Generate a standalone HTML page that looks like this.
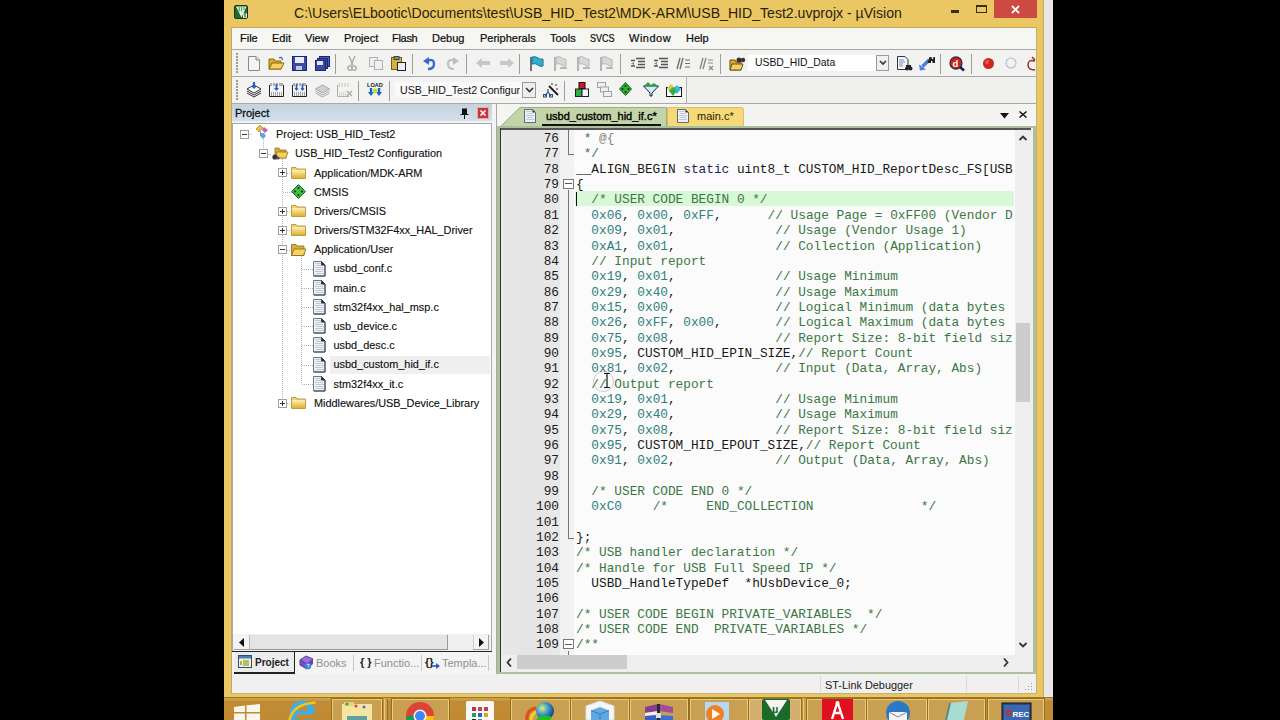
<!DOCTYPE html><html><head><meta charset="utf-8"><style>
*{margin:0;padding:0;box-sizing:border-box}
html,body{width:1280px;height:720px;overflow:hidden;background:#000}
body{position:relative;font-family:"Liberation Sans",sans-serif;}
.a{position:absolute}
.title{font-size:14.1px;color:#2c220a;white-space:nowrap;letter-spacing:0}
.menu{top:32px;font-size:11px;color:#0a0a0a;-webkit-text-stroke:0.22px #111;white-space:nowrap}
.sep{position:absolute;width:1px;background:#9c9c9c}
.code{position:absolute;left:576px;font-family:"Liberation Mono",monospace;font-size:12.77px;line-height:15.35px;white-space:pre;color:#181818}
.ln{position:absolute;left:501px;width:58px;font-family:"Liberation Mono",monospace;font-size:12.77px;line-height:15.35px;white-space:pre;color:#1a1a1a;text-align:right}
.c{color:#3a7744}
.n{color:#2e8080}
.k{color:#24245e}
.d{color:#8a7e70}
.tree{position:absolute;font-size:10.9px;color:#0a0a0a;-webkit-text-stroke:0.12px #222;white-space:nowrap;line-height:13px}
svg{position:absolute;overflow:visible}
</style></head><body>
<div class="a" style="left:224px;top:0;width:820px;height:698px;background:#EAC763"></div>
<div class="a" style="left:1043px;top:0;width:1px;height:698px;background:#c9ad52"></div>
<div class="a" style="left:1044px;top:0;width:9px;height:697px;background:#e8e8e6"></div>
<div class="a" style="left:232px;top:28px;width:804px;height:665px;background:#f0f0f0"></div>
<svg style="left:234px;top:5px" width="14" height="14"><rect x="0.5" y="0.5" width="13" height="13" rx="1.5" fill="#1f6c2a" stroke="#0d3a12"/><path d="M2 1.5H12.5L7.5 12.5Z" fill="#e4f2e0"/><path d="M5.2 2V6.5M7.6 2V6.5M10 2V5" stroke="#4a8a50" stroke-width="1"/><rect x="9" y="8.5" width="4" height="4.5" fill="#f4f8f0"/><path d="M12 9.5H10.2V10.8H11.8V12H9.8" stroke="#2a6a30" stroke-width=".8" fill="none"/></svg>
<div class="a title" style="left:294px;top:4.9px">C:\Users\ELbootic\Documents\test\USB_HID_Test2\MDK-ARM\USB_HID_Test2.uvprojx - µVision</div>
<div class="a" style="left:951px;top:10px;width:8px;height:3px;background:#3a2e10"></div>
<div class="a" style="left:976px;top:5px;width:11px;height:8px;border:1px solid #3a2e10;border-top-width:2px"></div>
<div class="a" style="left:994px;top:0;width:43px;height:18px;background:#CC4A42"></div>
<svg style="left:1011px;top:5px" width="9" height="9"><path d="M1 1L8 8M8 1L1 8" stroke="#fff" stroke-width="1.8"/></svg>
<div class="a" style="left:232px;top:28px;width:804px;height:21px;background:#f6f6f2"></div>
<div class="a" style="left:231px;top:27px;width:806px;height:1px;background:#c4a858"></div>
<div class="a" style="left:231px;top:27px;width:1px;height:667px;background:#c0a868"></div>
<div class="a" style="left:1036px;top:27px;width:1px;height:667px;background:#c8b070"></div>
<div class="a" style="left:231px;top:693px;width:806px;height:1px;background:#c8b070"></div>
<div class="a menu" style="left:240px;">File</div>
<div class="a menu" style="left:272px;">Edit</div>
<div class="a menu" style="left:305px;">View</div>
<div class="a menu" style="left:344px;">Project</div>
<div class="a menu" style="left:392px;letter-spacing:-0.3px">Flash</div>
<div class="a menu" style="left:432px;">Debug</div>
<div class="a menu" style="left:480px;">Peripherals</div>
<div class="a menu" style="left:550px;">Tools</div>
<div class="a menu" style="left:590px;transform:scaleX(0.82);transform-origin:0 0">SVCS</div>
<div class="a menu" style="left:629px;letter-spacing:0.5px">Window</div>
<div class="a menu" style="left:686px;">Help</div>
<div class="a" style="left:232px;top:49px;width:804px;height:1px;background:#a8a8a8"></div>
<div class="a" style="left:232px;top:50px;width:804px;height:26px;background:#f2f2f0"></div>
<div class="a" style="left:232px;top:76px;width:804px;height:1px;background:#a8a8a8"></div>
<div class="a" style="left:232px;top:77px;width:804px;height:26px;background:#f0f0ee"></div>
<div class="a" style="left:232px;top:77px;width:455px;height:26px;background:#f3f3f1;border-right:1px solid #b0b0b0"></div>
<div class="a" style="left:232px;top:103px;width:804px;height:1px;background:#a8a8a8"></div>
<div class="a" style="left:236px;top:53px;width:2px;height:2px;background:#9a9a9a"></div>
<div class="a" style="left:236px;top:56px;width:2px;height:2px;background:#9a9a9a"></div>
<div class="a" style="left:236px;top:59px;width:2px;height:2px;background:#9a9a9a"></div>
<div class="a" style="left:236px;top:62px;width:2px;height:2px;background:#9a9a9a"></div>
<div class="a" style="left:236px;top:65px;width:2px;height:2px;background:#9a9a9a"></div>
<div class="a" style="left:236px;top:68px;width:2px;height:2px;background:#9a9a9a"></div>
<div class="a" style="left:236px;top:71px;width:2px;height:2px;background:#9a9a9a"></div>
<svg style="left:247px;top:56px" width="14" height="15" viewBox="0 0 14 15"><path d="M1.5 .5H9L12.5 4V14.5H1.5Z" fill="#f4f4f4" stroke="#8a8a8a"/><path d="M9 .5V4H12.5" fill="#ddd" stroke="#8a8a8a"/></svg>
<svg style="left:268px;top:56px" width="16" height="15" viewBox="0 0 16 15"><path d="M1 3H6L7 5H13V13H1Z" fill="#d8a830" stroke="#8a6a10"/><path d="M1 13L4 7H16L13 13Z" fill="#f6d060" stroke="#8a6a10"/><path d="M11 2Q14 0 14.5 4" stroke="#4060a0" fill="none" stroke-width="1.2"/></svg>
<svg style="left:292px;top:56px" width="15" height="15" viewBox="0 0 15 15"><rect x=".5" y=".5" width="14" height="14" fill="#3a4aa0" stroke="#1a2470"/><rect x="3" y="1" width="9" height="6" fill="#e8ecf8"/><rect x="4" y="10" width="6" height="4" fill="#c0c8e8"/></svg>
<svg style="left:315px;top:56px" width="15" height="15" viewBox="0 0 15 15"><rect x="4.5" y=".5" width="10" height="10" fill="#5060b0" stroke="#1a2470"/><rect x="2.5" y="2.5" width="10" height="10" fill="#4050a8" stroke="#1a2470"/><rect x=".5" y="4.5" width="10" height="10" fill="#3a4aa0" stroke="#1a2470"/><rect x="2" y="5" width="6" height="4" fill="#e0e4f4"/></svg>
<div class="sep" style="left:335px;top:54px;height:20px"></div>
<svg style="left:347px;top:56px" width="10" height="15" viewBox="0 0 10 15"><path d="M2 0L6 9M8 0L4 9" stroke="#a8a8a8" stroke-width="1.3"/><circle cx="3" cy="12" r="2.2" fill="none" stroke="#a8a8a8" stroke-width="1.3"/><circle cx="7" cy="12" r="2.2" fill="none" stroke="#a8a8a8" stroke-width="1.3"/></svg>
<svg style="left:369px;top:57px" width="15" height="13" viewBox="0 0 15 13"><rect x=".5" y=".5" width="8" height="9" fill="#f0f0f0" stroke="#b0b0b0"/><rect x="5.5" y="3.5" width="8" height="9" fill="#f0f0f0" stroke="#b0b0b0"/></svg>
<svg style="left:391px;top:56px" width="16" height="15" viewBox="0 0 16 15"><rect x=".5" y="1.5" width="10" height="12" fill="#d8b040" stroke="#7a5a10"/><rect x="3" y=".5" width="5" height="3" fill="#888" stroke="#444"/><rect x="6.5" y="6.5" width="8" height="8" fill="#e8eef8" stroke="#222"/></svg>
<div class="sep" style="left:412px;top:54px;height:20px"></div>
<svg style="left:423px;top:57px" width="13" height="13" viewBox="0 0 13 13"><path d="M4 4Q11 1 11 7Q11 12 5 12" fill="none" stroke="#3a6ad0" stroke-width="2.4"/><path d="M0 4L6 0V8Z" fill="#3a6ad0"/></svg>
<svg style="left:447px;top:57px" width="12" height="13" viewBox="0 0 12 13"><path d="M8 4Q1 1 1 7Q1 12 7 12" fill="none" stroke="#b8c0c4" stroke-width="2"/><path d="M12 4L6 0V8Z" fill="#b8c0c4"/></svg>
<div class="sep" style="left:466px;top:54px;height:20px"></div>
<svg style="left:476px;top:58px" width="15" height="10" viewBox="0 0 15 10"><path d="M0 5L6 0V3H14V7H6V10Z" fill="#c4c8cc"/></svg>
<svg style="left:499px;top:58px" width="15" height="10" viewBox="0 0 15 10"><path d="M15 5L9 0V3H1V7H9V10Z" fill="#c4c8cc"/></svg>
<div class="sep" style="left:519px;top:54px;height:20px"></div>
<svg style="left:530px;top:56px" width="13" height="15" viewBox="0 0 13 15"><path d="M1 15V1" stroke="#707070" stroke-width="2"/><path d="M2 1Q6 0 8 2Q10 4 13 3V10Q10 11 8 9Q6 7 2 8Z" fill="#30b0d0" stroke="#1a7090"/></svg>
<svg style="left:554px;top:56px" width="14" height="15" viewBox="0 0 14 15"><path d="M1 15V1" stroke="#b4b4b4" stroke-width="2"/><path d="M2 1Q6 0 8 2Q10 4 12 3V10Q10 11 8 9Q6 7 2 8Z" fill="#d8d8d8" stroke="#b8b8b8"/><path d="M6 12H13" stroke="#b8b8b8" stroke-width="2"/></svg>
<svg style="left:577px;top:56px" width="14" height="15" viewBox="0 0 14 15"><path d="M1 15V1" stroke="#b4b4b4" stroke-width="2"/><path d="M2 1Q6 0 8 2Q10 4 12 3V10Q10 11 8 9Q6 7 2 8Z" fill="#d8d8d8" stroke="#b8b8b8"/><path d="M6 12H13" stroke="#b8b8b8" stroke-width="2"/></svg>
<svg style="left:600px;top:56px" width="14" height="15" viewBox="0 0 14 15"><path d="M1 15V1" stroke="#b4b4b4" stroke-width="2"/><path d="M2 1Q6 0 8 2Q10 4 12 3V10Q10 11 8 9Q6 7 2 8Z" fill="#d8d8d8" stroke="#b8b8b8"/><path d="M6 12H13" stroke="#b8b8b8" stroke-width="2"/></svg>
<div class="sep" style="left:620px;top:54px;height:20px"></div>
<svg style="left:631px;top:57px" width="14" height="13" viewBox="0 0 14 13"><path d="M5 1.5H14M7 4.5H14M7 7.5H14M5 10.5H14M0 3.5H4M0 9H4" stroke="#555" stroke-width="1.3"/><path d="M3 5L0 6.5L3 8Z" fill="#888"/></svg>
<svg style="left:654px;top:57px" width="14" height="13" viewBox="0 0 14 13"><path d="M5 1.5H14M7 4.5H14M7 7.5H14M5 10.5H14M0 3.5H4M0 9H4" stroke="#555" stroke-width="1.3"/><path d="M3 5L0 6.5L3 8Z" fill="#888"/></svg>
<svg style="left:676px;top:57px" width="14" height="13" viewBox="0 0 14 13"><path d="M4 1L1 12M7 1L4 12" stroke="#707070" stroke-width="1.4"/><path d="M9 3H14M9 6.5H14M9 10H14" stroke="#707070" stroke-width="1.2"/></svg>
<svg style="left:699px;top:57px" width="15" height="14" viewBox="0 0 15 14"><path d="M4 1L1 12M7 1L4 12" stroke="#8a8a8a" stroke-width="1.4"/><path d="M9 3H14M9 6H14M10 9L14 13M14 9L10 13" stroke="#8a8a8a" stroke-width="1.2"/></svg>
<div class="sep" style="left:720px;top:54px;height:20px"></div>
<svg style="left:729px;top:56px" width="16" height="15" viewBox="0 0 16 15"><path d="M1 4H6L7 6H12V14H1Z" fill="#d8a830" stroke="#6a5010"/><path d="M1 14L3 8H14L12 14Z" fill="#f4d060" stroke="#6a5010"/><circle cx="10" cy="4" r="2.5" fill="#333"/><circle cx="14" cy="4" r="2.2" fill="#333"/></svg>
<div class="a" style="left:748px;top:55px;width:141px;height:16px;background:#fff"></div>
<div class="a" style="left:755px;top:57px;font-size:10.4px;color:#111;white-space:nowrap">USBD_HID_Data</div>
<div class="a" style="left:876px;top:55px;width:13px;height:16px;background:#f0f0f0;border:1px solid #9a9a9a"></div>
<svg style="left:879px;top:60px" width="8" height="6" viewBox="0 0 8 6"><path d="M1 1L4 4L7 1" stroke="#333" stroke-width="1.6" fill="none"/></svg>
<svg style="left:897px;top:56px" width="15" height="15" viewBox="0 0 15 15"><path d="M.5 .5H8L11 3.5V13.5H.5Z" fill="#f6f8fc" stroke="#333"/><path d="M2 4H7M2 6H8M2 8H6M2 10H6" stroke="#7090c8"/><circle cx="10" cy="12.5" r="2" fill="#222"/><circle cx="13.5" cy="12.5" r="2" fill="#222"/><rect x="9" y="9" width="5" height="2.5" fill="#222"/></svg>
<svg style="left:919px;top:56px" width="16" height="15" viewBox="0 0 16 15"><path d="M10 4L3.5 10.5" stroke="#4a7ae0" stroke-width="3.2"/><path d="M0 8.5L1 14.5L7 13.5Z" fill="#4a7ae0"/><path d="M8.5 6.5L10.5 1H12.5L13 3H14L14.5 1H16V7H13.5V5H12V7H8.5Z" fill="#222"/></svg>
<div class="sep" style="left:940px;top:54px;height:20px"></div>
<svg style="left:949px;top:56px" width="16" height="15" viewBox="0 0 16 15"><circle cx="7" cy="7" r="6" fill="#d42020" stroke="#333" stroke-width="1.3"/><text x="3.6" y="10.8" font-size="9.5" font-weight="bold" font-family="Liberation Sans" fill="#fff">d</text><path d="M11 11L15 14.5" stroke="#1a1a60" stroke-width="2.6"/></svg>
<div class="sep" style="left:971px;top:54px;height:20px"></div>
<svg style="left:982px;top:57px" width="13" height="13" viewBox="0 0 13 13"><circle cx="6.5" cy="6.5" r="5.5" fill="#c82a20"/><circle cx="5" cy="5" r="2" fill="#f07060" opacity=".7"/></svg>
<svg style="left:1005px;top:57px" width="13" height="13" viewBox="0 0 13 13"><circle cx="6" cy="6" r="5" fill="none" stroke="#b8c0c8" stroke-width="1.2"/></svg>
<svg style="left:1026px;top:56px" width="10" height="15" viewBox="0 0 10 15"><path d="M9 5Q2 3 2 9Q2 14 9 14" fill="none" stroke="#a02020" stroke-width="1.4"/><path d="M6 1L9 4" stroke="#a02020" stroke-width="1.4"/></svg>
<div class="a" style="left:236px;top:80px;width:2px;height:2px;background:#9a9a9a"></div>
<div class="a" style="left:236px;top:83px;width:2px;height:2px;background:#9a9a9a"></div>
<div class="a" style="left:236px;top:86px;width:2px;height:2px;background:#9a9a9a"></div>
<div class="a" style="left:236px;top:89px;width:2px;height:2px;background:#9a9a9a"></div>
<div class="a" style="left:236px;top:92px;width:2px;height:2px;background:#9a9a9a"></div>
<div class="a" style="left:236px;top:95px;width:2px;height:2px;background:#9a9a9a"></div>
<div class="a" style="left:236px;top:98px;width:2px;height:2px;background:#9a9a9a"></div>
<svg style="left:246px;top:82px" width="16" height="15" viewBox="0 0 16 15"><path d="M8 3L15 7L8 11L1 7Z" fill="#fff" stroke="#333"/><path d="M1 9L8 13L15 9M1 11L8 15L15 11" fill="none" stroke="#333"/><path d="M8 0V6" stroke="#2a60c0" stroke-width="2.2"/><path d="M5 4L8 7L11 4" fill="#2a60c0"/></svg>
<svg style="left:269px;top:82px" width="15" height="15" viewBox="0 0 15 15"><path d="M.5 3V14.5H14.5V3" fill="#f4f4f4" stroke="#222"/><path d="M2 1V4M5 1V4M8 1V4M11 1V4M13 1V4" stroke="#444" stroke-width=".8"/><path d="M2 11H13M2 13H13" stroke="#555" stroke-dasharray="1 1"/><path d="M7.5 2V8" stroke="#2a60c0" stroke-width="1.8"/><path d="M5 6L7.5 9L10 6Z" fill="#2a60c0"/></svg>
<svg style="left:292px;top:82px" width="15" height="15" viewBox="0 0 15 15"><path d="M.5 3V14.5H14.5V3" fill="#f4f4f4" stroke="#222"/><path d="M2 1V4M5 1V4M8 1V4M11 1V4M13 1V4" stroke="#444" stroke-width=".8"/><path d="M2 11H13M2 13H13" stroke="#555" stroke-dasharray="1 1"/><path d="M4.5 2V8M10.5 2V8" stroke="#2a60c0" stroke-width="1.6"/><path d="M2.5 6L4.5 9L6.5 6ZM8.5 6L10.5 9L12.5 6Z" fill="#2a60c0"/></svg>
<svg style="left:315px;top:82px" width="15" height="15" viewBox="0 0 15 15"><path d="M7.5 3L14.5 7L7.5 11L.5 7Z" fill="#d0d0d0" stroke="#a8a8a8"/><path d="M.5 9L7.5 13L14.5 9M.5 11L7.5 15L14.5 11" fill="none" stroke="#a8a8a8"/></svg>
<svg style="left:337px;top:82px" width="16" height="15" viewBox="0 0 16 15"><path d="M.5 3V14.5H12" fill="none" stroke="#b0b0b0"/><path d="M2 1V5M5 1V5M8 1V5M11 1V5" stroke="#b8b8b8" stroke-width=".8"/><path d="M2 11H10M2 13H10" stroke="#b8b8b8" stroke-dasharray="1 1"/><path d="M10 9L15 14M15 9L10 14" stroke="#b0b0b0" stroke-width="1.6"/></svg>
<div class="sep" style="left:358px;top:81px;height:20px"></div>
<svg style="left:367px;top:81px" width="17" height="17" viewBox="0 0 17 17"><text x="0" y="6" font-size="5.6" font-weight="bold" font-family="Liberation Sans" fill="#222">LOAD</text><path d="M4 7V12M12 7V12" stroke="#1a60c8" stroke-width="2.4"/><path d="M1 11L4 15L7 11ZM9 11L12 15L15 11Z" fill="#1a60c8"/><circle cx="8" cy="10" r="2.5" fill="#b8e040"/></svg>
<div class="sep" style="left:389px;top:81px;height:20px"></div>
<div class="a" style="left:395px;top:82px;width:141px;height:15px;background:#fafafa"></div>
<div class="a" style="left:400px;top:84px;font-size:10.6px;color:#111;white-space:nowrap;width:120px;overflow:hidden">USB_HID_Test2 Configuration</div>
<div class="a" style="left:522px;top:82px;width:14px;height:16px;background:#eeeeee;border:1px solid #9a9a9a"></div>
<svg style="left:525px;top:87px" width="9" height="6" viewBox="0 0 9 6"><path d="M1 1L4.5 4.5L8 1" stroke="#333" stroke-width="1.6" fill="none"/></svg>
<svg style="left:543px;top:82px" width="16" height="15" viewBox="0 0 16 15"><path d="M6 4L15 13" stroke="#222" stroke-width="2"/><circle cx="9" cy="2" r=".9" fill="#666"/><circle cx="13" cy="3" r=".9" fill="#666"/><circle cx="14" cy="7" r=".9" fill="#666"/><path d="M5 7V10M5 10L2 14M5 10L8 14" stroke="#2a4a8a" stroke-width="1.2"/><rect x="0.5" y="12.5" width="3" height="2.5" fill="none" stroke="#2a4a8a"/><rect x="6.5" y="12.5" width="3" height="2.5" fill="none" stroke="#2a4a8a"/></svg>
<div class="sep" style="left:564px;top:81px;height:20px"></div>
<svg style="left:575px;top:82px" width="14" height="15" viewBox="0 0 14 15"><rect x="4" y=".5" width="6" height="6" fill="#c02030" stroke="#300"/><rect x=".5" y="7" width="6.5" height="7.5" fill="#30b040" stroke="#123"/><rect x="7" y="7" width="6.5" height="7.5" fill="#f4f4f4" stroke="#123"/></svg>
<svg style="left:597px;top:82px" width="15" height="15" viewBox="0 0 15 15"><rect x=".5" y=".5" width="8" height="5" fill="#f0f0f0" stroke="#a0a0a0"/><rect x="3.5" y="5" width="8" height="5" fill="#f0f0f0" stroke="#a0a0a0"/><rect x="6.5" y="9.5" width="8" height="5" fill="#f0f0f0" stroke="#a0a0a0"/></svg>
<svg style="left:619px;top:82px" width="13" height="14" viewBox="0 0 13 14"><path d="M6.5 .5L12.5 7L6.5 13.5L.5 7Z" fill="#30b030" stroke="#1a6a1a"/><circle cx="6.5" cy="4" r="1" fill="#123"/><circle cx="6.5" cy="10" r="1" fill="#123"/><circle cx="3.5" cy="7" r="1" fill="#123"/><circle cx="9.5" cy="7" r="1" fill="#123"/></svg>
<svg style="left:643px;top:82px" width="16" height="15" viewBox="0 0 16 15"><path d="M.5 4L15.5 4L9 11V14H7V11Z" fill="#c8f0f8" stroke="#223"/><path d="M1 4L5 0L8 3L11 1L15 4Z" fill="#30a040"/></svg>
<svg style="left:666px;top:82px" width="16" height="15" viewBox="0 0 16 15"><rect x=".5" y="5.5" width="15" height="9" fill="#fff" stroke="#111"/><path d="M5 2L9 6L5 11L1 6Z" fill="#d8d040"/><path d="M11 3L15 7L11 12L7 7Z" fill="#40b8e0"/><path d="M7 5L11 9L7 14L3 9Z" fill="#30b040"/></svg>
<div class="a" style="left:232px;top:104px;width:260px;height:19px;background:#eef2f2"></div>
<div class="a" style="left:232px;top:104px;width:260px;height:16.5px;background:linear-gradient(#c4d3df,#d3dfe9)"></div>
<div class="a" style="left:235px;top:107px;font-size:11px;color:#111;white-space:nowrap;-webkit-text-stroke:0.3px #111">Project</div>
<svg style="left:460px;top:108px" width="9" height="11" viewBox="0 0 9 11"><path d="M2 .5H7V6H8.5V7H.5V6H2Z" fill="#111"/><path d="M4.5 7V11" stroke="#111"/></svg>
<div class="a" style="left:477px;top:107px;width:12px;height:12px;background:#C3383A;border:1px solid #e8a8a8"></div>
<svg style="left:480px;top:110px" width="6" height="6" viewBox="0 0 6 6"><path d="M.5 .5L5.5 5.5M5.5 .5L.5 5.5" stroke="#fff" stroke-width="1.6"/></svg>
<div class="a" style="left:232px;top:123px;width:260px;height:528px;background:#fff;border:1px solid #a8a8a8;border-bottom:none"></div>
<div class="a" style="left:330px;top:355.7px;width:160px;height:18px;background:#efefef"></div>
<div class="a" style="left:263px;top:139.4px;width:1px;height:9.2px;background:repeating-linear-gradient(#b4b4b4 0 1px,transparent 1px 2px)"></div>
<div class="a" style="left:282px;top:158.6px;width:1px;height:244.5px;background:repeating-linear-gradient(#b4b4b4 0 1px,transparent 1px 2px)"></div>
<div class="a" style="left:301px;top:255.5px;width:1px;height:128.3px;background:repeating-linear-gradient(#b4b4b4 0 1px,transparent 1px 2px)"></div>
<div class="a" style="left:249px;top:134px;width:4px;height:1px;background:repeating-linear-gradient(90deg,#b4b4b4 0 1px,transparent 1px 2px)"></div>
<div class="a" style="left:240px;top:130px;width:9px;height:9px;background:#fff;border:1px solid #9aa0a8"></div>
<div class="a" style="left:242px;top:134px;width:5px;height:1px;background:#333"></div>
<svg style="left:254px;top:125.4px" width="15" height="15" viewBox="0 0 15 15"><path d="M2 4L6 0L9 3L5 7Z" fill="#e8c040" stroke="#a08020" stroke-width=".6"/><path d="M10 2L14 5L11 8L8 5Z" fill="#c060c0"/><path d="M6 8L10 8L12 11L9 14L6 11Z" fill="#60a8d8"/><path d="M6 6L7 9" stroke="#888"/></svg>
<div class="tree" style="left:276px;top:128.1px">Project: USB_HID_Test2</div>
<div class="a" style="left:268px;top:154px;width:4px;height:1px;background:repeating-linear-gradient(90deg,#b4b4b4 0 1px,transparent 1px 2px)"></div>
<div class="a" style="left:259px;top:149px;width:9px;height:9px;background:#fff;border:1px solid #9aa0a8"></div>
<div class="a" style="left:261px;top:153px;width:5px;height:1px;background:#333"></div>
<svg style="left:272px;top:144.59px" width="16" height="15" viewBox="0 0 16 15"><path d="M3 3H7L8 5H14V13H3Z" fill="#d8a830" stroke="#8a6a10" stroke-width=".7"/><path d="M3 13L5 7H16L14 13Z" fill="#f4d060" stroke="#8a6a10" stroke-width=".7"/><circle cx="3" cy="12" r="2.6" fill="#333"/><circle cx="6" cy="13" r="1.6" fill="#555"/></svg>
<div class="tree" style="left:295px;top:147.3px">USB_HID_Test2 Configuration</div>
<div class="a" style="left:287px;top:173px;width:4px;height:1px;background:repeating-linear-gradient(90deg,#b4b4b4 0 1px,transparent 1px 2px)"></div>
<div class="a" style="left:278px;top:168px;width:9px;height:9px;background:#fff;border:1px solid #9aa0a8"></div>
<div class="a" style="left:280px;top:172px;width:5px;height:1px;background:#333"></div>
<div class="a" style="left:282px;top:170px;width:1px;height:5px;background:#333"></div>
<svg style="left:291px;top:165.78px" width="15" height="13" viewBox="0 0 15 13"><path d="M.5 1.5H5L6 3H14.5V12.5H.5Z" fill="#f0d070" stroke="#a88a30" stroke-width=".8"/><rect x="1" y="4" width="13" height="8" fill="url(#fg)"/></svg>
<div class="tree" style="left:314px;top:166.5px">Application/MDK-ARM</div>
<div class="a" style="left:287px;top:192px;width:4px;height:1px;background:repeating-linear-gradient(90deg,#b4b4b4 0 1px,transparent 1px 2px)"></div>
<div class="a" style="left:283px;top:192px;width:9px;height:1px;background:repeating-linear-gradient(90deg,#b4b4b4 0 1px,transparent 1px 2px)"></div>
<svg style="left:291px;top:183.97000000000003px" width="15" height="15" viewBox="0 0 15 15"><path d="M7.5 .5L14.5 7.5L7.5 14.5L.5 7.5Z" fill="#40c040" stroke="#1a6a1a"/><circle cx="7.5" cy="4" r="1" fill="#123"/><circle cx="7.5" cy="11" r="1" fill="#123"/><circle cx="4" cy="7.5" r="1" fill="#123"/><circle cx="11" cy="7.5" r="1" fill="#123"/></svg>
<div class="tree" style="left:314px;top:185.7px">CMSIS</div>
<div class="a" style="left:287px;top:211px;width:4px;height:1px;background:repeating-linear-gradient(90deg,#b4b4b4 0 1px,transparent 1px 2px)"></div>
<div class="a" style="left:278px;top:207px;width:9px;height:9px;background:#fff;border:1px solid #9aa0a8"></div>
<div class="a" style="left:280px;top:211px;width:5px;height:1px;background:#333"></div>
<div class="a" style="left:282px;top:209px;width:1px;height:5px;background:#333"></div>
<svg style="left:291px;top:204.16000000000003px" width="15" height="13" viewBox="0 0 15 13"><path d="M.5 1.5H5L6 3H14.5V12.5H.5Z" fill="#f0d070" stroke="#a88a30" stroke-width=".8"/><rect x="1" y="4" width="13" height="8" fill="url(#fg)"/></svg>
<div class="tree" style="left:314px;top:204.9px">Drivers/CMSIS</div>
<div class="a" style="left:287px;top:230px;width:4px;height:1px;background:repeating-linear-gradient(90deg,#b4b4b4 0 1px,transparent 1px 2px)"></div>
<div class="a" style="left:278px;top:226px;width:9px;height:9px;background:#fff;border:1px solid #9aa0a8"></div>
<div class="a" style="left:280px;top:230px;width:5px;height:1px;background:#333"></div>
<div class="a" style="left:282px;top:228px;width:1px;height:5px;background:#333"></div>
<svg style="left:291px;top:223.35000000000002px" width="15" height="13" viewBox="0 0 15 13"><path d="M.5 1.5H5L6 3H14.5V12.5H.5Z" fill="#f0d070" stroke="#a88a30" stroke-width=".8"/><rect x="1" y="4" width="13" height="8" fill="url(#fg)"/></svg>
<div class="tree" style="left:314px;top:224.1px">Drivers/STM32F4xx_HAL_Driver</div>
<div class="a" style="left:287px;top:250px;width:4px;height:1px;background:repeating-linear-gradient(90deg,#b4b4b4 0 1px,transparent 1px 2px)"></div>
<div class="a" style="left:278px;top:245px;width:9px;height:9px;background:#fff;border:1px solid #9aa0a8"></div>
<div class="a" style="left:280px;top:249px;width:5px;height:1px;background:#333"></div>
<svg style="left:291px;top:242.54000000000002px" width="15" height="13" viewBox="0 0 15 13"><path d="M.5 1.5H5L6 3H13V12.5H.5Z" fill="#d8b040" stroke="#8a6a10" stroke-width=".8"/><path d="M.5 12.5L3 6H15L12.5 12.5Z" fill="#f4d468" stroke="#8a6a10" stroke-width=".8"/></svg>
<div class="tree" style="left:314px;top:243.2px">Application/User</div>
<div class="a" style="left:302px;top:269px;width:11px;height:1px;background:repeating-linear-gradient(90deg,#b4b4b4 0 1px,transparent 1px 2px)"></div>
<svg style="left:313px;top:260.73px" width="13" height="16" viewBox="0 0 13 16"><path d="M.5 .5H8.5L12 4V15H.5Z" fill="#eef2f8" stroke="#707888"/><path d="M1 15H12V4" stroke="#3a4050" fill="none"/><path d="M2.5 2.5H7.5M2.5 6.5H10.5M2.5 10.5H10.5" stroke="#98a0b0" stroke-dasharray="1 1"/><path d="M3.5 4.5H10.5M3.5 8.5H10.5M3.5 12.5H10.5" stroke="#98a0b0" stroke-dasharray="1 1"/><path d="M8.5 .5V4H12Z" fill="#2a3040" stroke="#2a3040" stroke-width=".8"/></svg>
<div class="tree" style="left:333.5px;top:262.4px">usbd_conf.c</div>
<div class="a" style="left:302px;top:288px;width:11px;height:1px;background:repeating-linear-gradient(90deg,#b4b4b4 0 1px,transparent 1px 2px)"></div>
<svg style="left:313px;top:279.92px" width="13" height="16" viewBox="0 0 13 16"><path d="M.5 .5H8.5L12 4V15H.5Z" fill="#eef2f8" stroke="#707888"/><path d="M1 15H12V4" stroke="#3a4050" fill="none"/><path d="M2.5 2.5H7.5M2.5 6.5H10.5M2.5 10.5H10.5" stroke="#98a0b0" stroke-dasharray="1 1"/><path d="M3.5 4.5H10.5M3.5 8.5H10.5M3.5 12.5H10.5" stroke="#98a0b0" stroke-dasharray="1 1"/><path d="M8.5 .5V4H12Z" fill="#2a3040" stroke="#2a3040" stroke-width=".8"/></svg>
<div class="tree" style="left:333.5px;top:281.6px">main.c</div>
<div class="a" style="left:302px;top:307px;width:11px;height:1px;background:repeating-linear-gradient(90deg,#b4b4b4 0 1px,transparent 1px 2px)"></div>
<svg style="left:313px;top:299.11px" width="13" height="16" viewBox="0 0 13 16"><path d="M.5 .5H8.5L12 4V15H.5Z" fill="#eef2f8" stroke="#707888"/><path d="M1 15H12V4" stroke="#3a4050" fill="none"/><path d="M2.5 2.5H7.5M2.5 6.5H10.5M2.5 10.5H10.5" stroke="#98a0b0" stroke-dasharray="1 1"/><path d="M3.5 4.5H10.5M3.5 8.5H10.5M3.5 12.5H10.5" stroke="#98a0b0" stroke-dasharray="1 1"/><path d="M8.5 .5V4H12Z" fill="#2a3040" stroke="#2a3040" stroke-width=".8"/></svg>
<div class="tree" style="left:333.5px;top:300.8px">stm32f4xx_hal_msp.c</div>
<div class="a" style="left:302px;top:326px;width:11px;height:1px;background:repeating-linear-gradient(90deg,#b4b4b4 0 1px,transparent 1px 2px)"></div>
<svg style="left:313px;top:318.3px" width="13" height="16" viewBox="0 0 13 16"><path d="M.5 .5H8.5L12 4V15H.5Z" fill="#eef2f8" stroke="#707888"/><path d="M1 15H12V4" stroke="#3a4050" fill="none"/><path d="M2.5 2.5H7.5M2.5 6.5H10.5M2.5 10.5H10.5" stroke="#98a0b0" stroke-dasharray="1 1"/><path d="M3.5 4.5H10.5M3.5 8.5H10.5M3.5 12.5H10.5" stroke="#98a0b0" stroke-dasharray="1 1"/><path d="M8.5 .5V4H12Z" fill="#2a3040" stroke="#2a3040" stroke-width=".8"/></svg>
<div class="tree" style="left:333.5px;top:320.0px">usb_device.c</div>
<div class="a" style="left:302px;top:345px;width:11px;height:1px;background:repeating-linear-gradient(90deg,#b4b4b4 0 1px,transparent 1px 2px)"></div>
<svg style="left:313px;top:337.49px" width="13" height="16" viewBox="0 0 13 16"><path d="M.5 .5H8.5L12 4V15H.5Z" fill="#eef2f8" stroke="#707888"/><path d="M1 15H12V4" stroke="#3a4050" fill="none"/><path d="M2.5 2.5H7.5M2.5 6.5H10.5M2.5 10.5H10.5" stroke="#98a0b0" stroke-dasharray="1 1"/><path d="M3.5 4.5H10.5M3.5 8.5H10.5M3.5 12.5H10.5" stroke="#98a0b0" stroke-dasharray="1 1"/><path d="M8.5 .5V4H12Z" fill="#2a3040" stroke="#2a3040" stroke-width=".8"/></svg>
<div class="tree" style="left:333.5px;top:339.2px">usbd_desc.c</div>
<div class="a" style="left:302px;top:365px;width:11px;height:1px;background:repeating-linear-gradient(90deg,#b4b4b4 0 1px,transparent 1px 2px)"></div>
<svg style="left:313px;top:356.68000000000006px" width="13" height="16" viewBox="0 0 13 16"><path d="M.5 .5H8.5L12 4V15H.5Z" fill="#eef2f8" stroke="#707888"/><path d="M1 15H12V4" stroke="#3a4050" fill="none"/><path d="M2.5 2.5H7.5M2.5 6.5H10.5M2.5 10.5H10.5" stroke="#98a0b0" stroke-dasharray="1 1"/><path d="M3.5 4.5H10.5M3.5 8.5H10.5M3.5 12.5H10.5" stroke="#98a0b0" stroke-dasharray="1 1"/><path d="M8.5 .5V4H12Z" fill="#2a3040" stroke="#2a3040" stroke-width=".8"/></svg>
<div class="tree" style="left:333.5px;top:358.4px">usbd_custom_hid_if.c</div>
<div class="a" style="left:302px;top:384px;width:11px;height:1px;background:repeating-linear-gradient(90deg,#b4b4b4 0 1px,transparent 1px 2px)"></div>
<svg style="left:313px;top:375.87px" width="13" height="16" viewBox="0 0 13 16"><path d="M.5 .5H8.5L12 4V15H.5Z" fill="#eef2f8" stroke="#707888"/><path d="M1 15H12V4" stroke="#3a4050" fill="none"/><path d="M2.5 2.5H7.5M2.5 6.5H10.5M2.5 10.5H10.5" stroke="#98a0b0" stroke-dasharray="1 1"/><path d="M3.5 4.5H10.5M3.5 8.5H10.5M3.5 12.5H10.5" stroke="#98a0b0" stroke-dasharray="1 1"/><path d="M8.5 .5V4H12Z" fill="#2a3040" stroke="#2a3040" stroke-width=".8"/></svg>
<div class="tree" style="left:333.5px;top:377.6px">stm32f4xx_it.c</div>
<div class="a" style="left:287px;top:403px;width:4px;height:1px;background:repeating-linear-gradient(90deg,#b4b4b4 0 1px,transparent 1px 2px)"></div>
<div class="a" style="left:278px;top:399px;width:9px;height:9px;background:#fff;border:1px solid #9aa0a8"></div>
<div class="a" style="left:280px;top:403px;width:5px;height:1px;background:#333"></div>
<div class="a" style="left:282px;top:401px;width:1px;height:5px;background:#333"></div>
<svg style="left:291px;top:396.06000000000006px" width="15" height="13" viewBox="0 0 15 13"><path d="M.5 1.5H5L6 3H14.5V12.5H.5Z" fill="#f0d070" stroke="#a88a30" stroke-width=".8"/><rect x="1" y="4" width="13" height="8" fill="url(#fg)"/></svg>
<div class="tree" style="left:314px;top:396.8px">Middlewares/USB_Device_Library</div>
<svg style="left:0;top:0" width="0" height="0"><defs><linearGradient id="fg" x1="0" y1="0" x2="0" y2="1"><stop offset="0" stop-color="#fff0b0"/><stop offset="1" stop-color="#e0b030"/></linearGradient></defs></svg>
<div class="a" style="left:233px;top:634px;width:258px;height:17px;background:#f0f0f0"></div>
<div class="a" style="left:234px;top:635px;width:16px;height:15px;background:#f4f4f4;border-right:1px solid #b8b8b8;border-bottom:1px solid #a0a0a0"></div>
<svg style="left:239px;top:638px" width="5" height="9" viewBox="0 0 5 9"><path d="M5 0V9L0 4.5Z" fill="#111"/></svg>
<div class="a" style="left:250px;top:635px;width:198px;height:15px;background:#e4e4e4;border-right:1px solid #9a9a9a;border-bottom:1px solid #9a9a9a"></div>
<div class="a" style="left:473px;top:635px;width:16px;height:15px;background:#f4f4f4;border-left:1px solid #d0d0d0;border-right:1px solid #a0a0a0;border-bottom:1px solid #a0a0a0"></div>
<svg style="left:479px;top:638px" width="5" height="9" viewBox="0 0 5 9"><path d="M0 0V9L5 4.5Z" fill="#111"/></svg>
<div class="a" style="left:232px;top:651px;width:260px;height:1px;background:#222"></div>
<div class="a" style="left:232px;top:652px;width:260px;height:22px;background:#f4f4f4"></div>
<div class="a" style="left:234px;top:652px;width:61px;height:22px;background:#ececec;border-right:1px solid #222;border-bottom:2px solid #222"></div>
<svg style="left:238px;top:655px" width="14" height="13" viewBox="0 0 14 13"><rect x=".5" y=".5" width="13" height="12" fill="#f8f4c0" stroke="#2a4a8a"/><rect x="1" y="1" width="12" height="2.5" fill="#4a7ac0"/><path d="M3 6V10M5 6H11M5 8H11M5 10H11" stroke="#6a8a20" stroke-width="1.2"/></svg>
<div class="a" style="left:255px;top:657px;font-size:10px;font-weight:bold;color:#222;white-space:nowrap">Project</div>
<svg style="left:299px;top:655px" width="15" height="15" viewBox="0 0 15 15"><path d="M1 5L7 1L14 4L8 9Z" fill="#9a70d8" stroke="#5a3aa0"/><path d="M1 5V10L8 14V9Z" fill="#7a50c0" stroke="#5a3aa0"/><path d="M8 9V14L14 9V4Z" fill="#6a40b0"/><circle cx="9" cy="11" r="3.2" fill="#3a80d8"/><text x="7.4" y="13.3" font-size="5.5" font-family="Liberation Sans" fill="#fff">?</text></svg>
<div class="a" style="left:316px;top:657px;font-size:11px;color:#909090;white-space:nowrap">Books</div>
<div class="a" style="left:353px;top:655px;width:1px;height:16px;background:#c8c8c8"></div>
<div class="a" style="left:360px;top:656px;font-size:11px;font-weight:bold;color:#222;white-space:nowrap">{ }</div>
<div class="a" style="left:374px;top:657px;font-size:11px;color:#909090;white-space:nowrap">Functio...</div>
<div class="a" style="left:421px;top:655px;width:1px;height:16px;background:#c8c8c8"></div>
<div class="a" style="left:425px;top:656px;font-size:11px;font-weight:bold;color:#222;white-space:nowrap">{}</div>
<svg style="left:432px;top:663px" width="8" height="6" viewBox="0 0 8 6"><path d="M0 3H5" stroke="#2a5ac0" stroke-width="1.6"/><path d="M4 0L8 3L4 6Z" fill="#2a5ac0"/></svg>
<div class="a" style="left:442px;top:657px;font-size:11px;color:#909090;white-space:nowrap">Templa...</div>
<div class="a" style="left:488px;top:655px;width:1px;height:16px;background:#c8c8c8"></div>
<div class="a" style="left:492px;top:104px;width:4px;height:570px;background:#f4f4f4"></div>
<div class="a" style="left:496px;top:104px;width:1px;height:570px;background:#a8a8a8"></div>
<div class="a" style="left:497px;top:104px;width:539px;height:23px;background:#f4f4f2"></div>
<svg style="left:497px;top:106px" width="175" height="22" viewBox="0 0 175 22"><path d="M3 21L23 1.5H169.5V21Z" fill="#c2d4a8" stroke="#9aac80"/></svg>
<svg style="left:524px;top:109px" width="12" height="14" viewBox="0 0 12 14"><path d="M.5 .5H8.5L11.5 3.5V13.5H.5Z" fill="#eef2f8" stroke="#606878"/><path d="M2.5 2.5H7.5M2.5 6.5H9.5M2.5 10.5H9.5M3.5 4.5H9.5M3.5 8.5H9.5M3.5 12" stroke="#98a0b0" stroke-dasharray="1 1"/><path d="M8.5 .5V3.5H11.5Z" fill="#2a3040"/></svg>
<div class="a" style="left:546px;top:110px;font-size:11px;color:#000;white-space:nowrap;-webkit-text-stroke:0.35px #000">usbd_custom_hid_if.c*</div>
<div class="a" style="left:542px;top:124px;width:119px;height:2px;background:#111"></div>
<svg style="left:666px;top:106px" width="80" height="22" viewBox="0 0 80 22"><path d="M1.5 21V3Q1.5 1.5 3 1.5H75Q77.5 1.5 77.5 4V21Z" fill="#f6da78" stroke="#d8c070"/></svg>
<svg style="left:677px;top:109px" width="12" height="14" viewBox="0 0 12 14"><path d="M.5 .5H8.5L11.5 3.5V13.5H.5Z" fill="#eef2f8" stroke="#606878"/><path d="M2.5 2.5H7.5M2.5 6.5H9.5M2.5 10.5H9.5M3.5 4.5H9.5M3.5 8.5H9.5M3.5 12" stroke="#98a0b0" stroke-dasharray="1 1"/><path d="M8.5 .5V3.5H11.5Z" fill="#2a3040"/></svg>
<div class="a" style="left:697px;top:110px;font-size:11px;color:#2a2010;white-space:nowrap">main.c*</div>
<svg style="left:1000px;top:113px" width="9" height="6" viewBox="0 0 9 6"><path d="M0 0H9L4.5 5.5Z" fill="#111"/></svg>
<svg style="left:1019px;top:111px" width="8" height="7" viewBox="0 0 8 7"><path d="M.5 .5L7.5 6.5M7.5 .5L.5 6.5" stroke="#111" stroke-width="1.5"/></svg>
<div class="a" style="left:497px;top:126px;width:539px;height:548px;background:#adbf9c"></div>
<div class="a" style="left:500px;top:128px;width:533px;height:544px;background:#fbfbfb"></div>
<div class="a" style="left:500px;top:128px;width:531px;height:2px;background:#555"></div>
<div class="a" style="left:500px;top:128px;width:1px;height:544px;background:#333"></div>
<div class="a" style="left:501px;top:130px;width:59px;height:525px;background:linear-gradient(90deg,#e8e8e8,#e4e4e4 55%,#e9e9e9)"></div>
<div class="a" style="left:560px;top:130px;width:14px;height:525px;background:#f2f2f2"></div>
<div class="a" style="left:575px;top:191.30px;width:439px;height:15px;background:#d8f8d8"></div>
<div class="a" style="left:575.5px;top:191.5px;width:1.5px;height:14.5px;background:#111"></div>
<div class="ln" style="top:131.10px"><div>76</div><div>77</div><div>78</div><div>79</div><div>80</div><div>81</div><div>82</div><div>83</div><div>84</div><div>85</div><div>86</div><div>87</div><div>88</div><div>89</div><div>90</div><div>91</div><div>92</div><div>93</div><div>94</div><div>95</div><div>96</div><div>97</div><div>98</div><div>99</div><div>100</div><div>101</div><div>102</div><div>103</div><div>104</div><div>105</div><div>106</div><div>107</div><div>108</div><div>109</div></div>
<div class="code" style="top:131.10px"><div><span class="c"> * </span><span class="d">@{</span></div><div><span class="c"> */</span></div><div>__ALIGN_BEGIN <span class="k">static</span> uint8_t CUSTOM_HID_ReportDesc_FS[USB</div><div>{</div><div>  <span class="c">/* USER CODE BEGIN 0 */</span></div><div>  <span class="n">0x06</span>, <span class="n">0x00</span>, <span class="n">0xFF</span>,      <span class="c">// Usage Page = 0xFF00 (Vendor D</span></div><div>  <span class="n">0x09</span>, <span class="n">0x01</span>,             <span class="c">// Usage (Vendor Usage 1)</span></div><div>  <span class="n">0xA1</span>, <span class="n">0x01</span>,             <span class="c">// Collection (Application)</span></div><div>  <span class="c">// Input report</span></div><div>  <span class="n">0x19</span>, <span class="n">0x01</span>,             <span class="c">// Usage Minimum</span></div><div>  <span class="n">0x29</span>, <span class="n">0x40</span>,             <span class="c">// Usage Maximum</span></div><div>  <span class="n">0x15</span>, <span class="n">0x00</span>,             <span class="c">// Logical Minimum (data bytes</span></div><div>  <span class="n">0x26</span>, <span class="n">0xFF</span>, <span class="n">0x00</span>,       <span class="c">// Logical Maximum (data bytes</span></div><div>  <span class="n">0x75</span>, <span class="n">0x08</span>,             <span class="c">// Report Size: 8-bit field siz</span></div><div>  <span class="n">0x95</span>, CUSTOM_HID_EPIN_SIZE,<span class="c">// Report Count</span></div><div>  <span class="n">0x81</span>, <span class="n">0x02</span>,             <span class="c">// Input (Data, Array, Abs)</span></div><div>  <span class="c">// Output report</span></div><div>  <span class="n">0x19</span>, <span class="n">0x01</span>,             <span class="c">// Usage Minimum</span></div><div>  <span class="n">0x29</span>, <span class="n">0x40</span>,             <span class="c">// Usage Maximum</span></div><div>  <span class="n">0x75</span>, <span class="n">0x08</span>,             <span class="c">// Report Size: 8-bit field siz</span></div><div>  <span class="n">0x95</span>, CUSTOM_HID_EPOUT_SIZE,<span class="c">// Report Count</span></div><div>  <span class="n">0x91</span>, <span class="n">0x02</span>,             <span class="c">// Output (Data, Array, Abs)</span></div><div>&nbsp;</div><div>  <span class="c">/* USER CODE END 0 */</span></div><div>  <span class="n">0xC0</span>    <span class="c">/*     END_COLLECTION              */</span></div><div>&nbsp;</div><div>};</div><div><span class="c">/* USB handler declaration */</span></div><div><span class="c">/* Handle for USB Full Speed IP */</span></div><div>  USBD_HandleTypeDef  *hUsbDevice_0;</div><div>&nbsp;</div><div><span class="c">/* USER CODE BEGIN PRIVATE_VARIABLES  */</span></div><div><span class="c">/* USER CODE END  PRIVATE_VARIABLES */</span></div><div><span class="c">/**</span></div></div>
<div class="a" style="left:568px;top:130px;width:1px;height:24.4px;background:#777"></div>
<div class="a" style="left:568px;top:154.4px;width:6px;height:1px;background:#777"></div>
<div class="a" style="left:563px;top:178.7px;width:11px;height:10px;background:#fff;border:1px solid #777"></div>
<div class="a" style="left:565px;top:183.2px;width:7px;height:1px;background:#555"></div>
<div class="a" style="left:568px;top:190.1px;width:1px;height:348.1px;background:#777"></div>
<div class="a" style="left:568px;top:538.2px;width:6px;height:1px;background:#777"></div>
<div class="a" style="left:563px;top:639.2px;width:11px;height:10px;background:#fff;border:1px solid #777"></div>
<div class="a" style="left:565px;top:643.8px;width:7px;height:1px;background:#555"></div>
<div class="a" style="left:568px;top:650.6px;width:1px;height:4px;background:#777"></div>
<div class="a" style="left:593px;top:370.5px;width:21px;height:21px;border-radius:50%;border:1.5px solid rgba(150,140,140,.45)"></div>
<svg style="left:604px;top:373px" width="7" height="15" viewBox="0 0 7 15"><path d="M0 .5H6M3 .5V14.5M0 14.5H6" stroke="#111" stroke-width="1.2"/></svg>
<div class="a" style="left:1015px;top:130px;width:18px;height:525px;background:#eeeeee"></div>
<svg style="left:1019px;top:135px" width="8" height="6" viewBox="0 0 8 6"><path d="M.5 5L4 1.5L7.5 5" stroke="#333" stroke-width="1.8" fill="none"/></svg>
<div class="a" style="left:1016px;top:323px;width:14px;height:79px;background:#cdcdcd"></div>
<svg style="left:1019px;top:642px" width="8" height="6" viewBox="0 0 8 6"><path d="M.5 1L4 4.5L7.5 1" stroke="#333" stroke-width="1.8" fill="none"/></svg>
<div class="a" style="left:501px;top:655px;width:532px;height:17px;background:#eeeeee"></div>
<svg style="left:506px;top:658px" width="6" height="9" viewBox="0 0 6 9"><path d="M5 .5L1.5 4.5L5 8.5" stroke="#333" stroke-width="1.8" fill="none"/></svg>
<div class="a" style="left:517px;top:655px;width:110px;height:14px;background:#cdcdcd"></div>
<svg style="left:1003px;top:658px" width="6" height="9" viewBox="0 0 6 9"><path d="M1 .5L4.5 4.5L1 8.5" stroke="#333" stroke-width="1.8" fill="none"/></svg>
<div class="a" style="left:232px;top:674px;width:804px;height:19px;background:#f0f0f0"></div>
<div class="a" style="left:820px;top:676px;width:1px;height:16px;background:#d8d8d8"></div>
<div class="a" style="left:966px;top:676px;width:1px;height:16px;background:#d8d8d8"></div>
<div class="a" style="left:1018px;top:676px;width:1px;height:16px;background:#d8d8d8"></div>
<div class="a" style="left:825px;top:679px;font-size:10.9px;color:#1a1a1a;white-space:nowrap">ST-Link Debugger</div>
<svg style="left:1024px;top:683px" width="9" height="8" viewBox="0 0 9 8"><path d="M7 0H8V1H7ZM4 3H5V4H4ZM7 3H8V4H7ZM1 6H2V7H1ZM4 6H5V7H4ZM7 6H8V7H7Z" fill="#999"/></svg>
<div class="a" style="left:224px;top:697px;width:829px;height:23px;background:linear-gradient(#c8a048 0,#c8a048 3px,#c28c34 4px,#c08a32)"></div>
<div class="a" style="left:224px;top:697px;width:829px;height:1px;background:#9a7838"></div>
<div class="a" style="left:331px;top:698px;width:52px;height:22px;background:#94701e"></div>
<div class="a" style="left:332px;top:699px;width:50px;height:21px;background:#c9a052;border:1px solid #ecca7c;border-bottom:none"></div>
<div class="a" style="left:391px;top:698px;width:59px;height:22px;background:#94701e"></div>
<div class="a" style="left:392px;top:699px;width:57px;height:21px;background:#c9a052;border:1px solid #ecca7c;border-bottom:none"></div>
<div class="a" style="left:510px;top:698px;width:61px;height:22px;background:#94701e"></div>
<div class="a" style="left:511px;top:699px;width:59px;height:21px;background:#c9a052;border:1px solid #ecca7c;border-bottom:none"></div>
<div class="a" style="left:570px;top:698px;width:60px;height:22px;background:#94701e"></div>
<div class="a" style="left:571px;top:699px;width:58px;height:21px;background:#c9a052;border:1px solid #ecca7c;border-bottom:none"></div>
<div class="a" style="left:629px;top:698px;width:60px;height:22px;background:#94701e"></div>
<div class="a" style="left:630px;top:699px;width:58px;height:21px;background:#c9a052;border:1px solid #ecca7c;border-bottom:none"></div>
<div class="a" style="left:689px;top:698px;width:60px;height:22px;background:#94701e"></div>
<div class="a" style="left:690px;top:699px;width:58px;height:21px;background:#c9a052;border:1px solid #ecca7c;border-bottom:none"></div>
<div class="a" style="left:748px;top:698px;width:54px;height:22px;background:#94701e"></div>
<div class="a" style="left:749px;top:699px;width:52px;height:21px;background:#d4b070;border:1px solid #ecca7c;border-bottom:none"></div>
<div class="a" style="left:806px;top:698px;width:61px;height:22px;background:#94701e"></div>
<div class="a" style="left:807px;top:699px;width:59px;height:21px;background:#c9a052;border:1px solid #ecca7c;border-bottom:none"></div>
<div class="a" style="left:866px;top:698px;width:62px;height:22px;background:#94701e"></div>
<div class="a" style="left:867px;top:699px;width:60px;height:21px;background:#c9a052;border:1px solid #ecca7c;border-bottom:none"></div>
<div class="a" style="left:927px;top:698px;width:59px;height:22px;background:#94701e"></div>
<div class="a" style="left:928px;top:699px;width:57px;height:21px;background:#c9a052;border:1px solid #ecca7c;border-bottom:none"></div>
<div class="a" style="left:987px;top:698px;width:58px;height:22px;background:#94701e"></div>
<div class="a" style="left:988px;top:699px;width:56px;height:21px;background:#c9a052;border:1px solid #ecca7c;border-bottom:none"></div>
<div class="a" style="left:384px;top:699px;width:4px;height:21px;background:#c9a052;border-left:1px solid #ecca7c;border-right:1px solid #94701e"></div>
<div class="a" style="left:803px;top:699px;width:3px;height:21px;background:#c9a052;border-left:1px solid #ecca7c"></div>
<svg style="left:234px;top:704px" width="26" height="16" viewBox="0 0 26 16"><path d="M0 3L11 1.5V8H0ZM12.5 1.3L26 0V8H12.5ZM0 9.5H11V16H0ZM12.5 9.5H26V16H12.5Z" fill="#fbf6ea"/></svg>
<svg style="left:288px;top:701px" width="30" height="19" viewBox="0 0 30 19"><path d="M24.5 11.5A10 10 0 1 0 22 19" stroke="#3cb0e6" stroke-width="5.5" fill="none"/><rect x="6" y="9.5" width="19" height="4" fill="#3cb0e6"/><path d="M1.5 19Q5 3 27.5 1.5" stroke="#f2c51a" stroke-width="2.6" fill="none"/></svg>
<svg style="left:342px;top:702px" width="30" height="18" viewBox="0 0 30 18"><rect x="0" y="2" width="30" height="16" fill="#f4e6a0"/><rect x="2" y="0" width="10" height="4" fill="#e8d080"/><circle cx="5" cy="2" r="1.5" fill="#40a040"/><circle cx="14" cy="4" r="1.5" fill="#d04040"/><circle cx="22" cy="5" r="1.5" fill="#4070c0"/><rect x="5" y="14" width="20" height="4" fill="#60a0a0"/></svg>
<svg style="left:405px;top:701px" width="30" height="19" viewBox="0 0 30 19"><circle cx="15" cy="15" r="14" fill="#db4437"/><path d="M15 15L1 15A14 14 0 0 0 8 27Z" fill="#0f9d58"/><path d="M15 15L29 15A14 14 0 0 1 22 27Z" fill="#f4c20d"/><circle cx="15" cy="15" r="6.5" fill="#fff"/><circle cx="15" cy="15" r="5" fill="#4285f4"/></svg>
<svg style="left:466px;top:701px" width="28" height="19" viewBox="0 0 28 19"><rect x="0" y="0" width="28" height="21" rx="1.5" fill="#f8f8f8"/><rect x="6" y="6" width="4" height="4" fill="#c03040"/><rect x="12" y="6" width="4" height="4" fill="#d04050"/><rect x="18" y="6" width="4" height="4" fill="#c04040"/><rect x="6" y="12" width="4" height="4" fill="#20a060"/><rect x="12" y="12" width="4" height="4" fill="#3060c0"/><rect x="18" y="12" width="4" height="4" fill="#e0a020"/><rect x="6" y="18" width="4" height="3" fill="#222"/><rect x="12" y="18" width="4" height="3" fill="#20a0a0"/></svg>
<svg style="left:524px;top:701px" width="34" height="19" viewBox="0 0 34 19"><defs><radialGradient id="gl" cx=".35" cy=".35" r=".7"><stop offset="0" stop-color="#e8f060"/><stop offset=".45" stop-color="#40a0d0"/><stop offset="1" stop-color="#1a3a80"/></radialGradient></defs><path d="M3 19Q2 9 12 7" stroke="#e05020" stroke-width="3.5" fill="none"/><path d="M7 19Q7 13 13 11" stroke="#f0d020" stroke-width="3" fill="none"/><circle cx="21" cy="10" r="9" fill="url(#gl)"/><path d="M12 19Q18 12 28 16L26 19Z" fill="#20c020"/></svg>
<svg style="left:585px;top:701px" width="30" height="19" viewBox="0 0 30 19"><path d="M15 0L29 5V19H1V5Z" fill="#f4f6f8" stroke="#d8dee4"/><path d="M15 6L24 9.5V19H6V9.5Z" fill="#60a8e0"/><path d="M6 9.5L15 13L24 9.5M15 13V19" stroke="#3a80c0" fill="none"/></svg>
<svg style="left:644px;top:704px" width="30" height="16" viewBox="0 0 30 16"><path d="M1 3L14 0V7L1 9Z" fill="#8a3a90"/><path d="M15 0L29 3V9L15 7Z" fill="#a04aa0"/><path d="M1 9L14 7V11L1 12Z" fill="#f0f0f0"/><path d="M1 12L14 11V16H1Z" fill="#3a60c0"/><path d="M15 11L29 12V16H15Z" fill="#3a70d0"/><rect x="13" y="0" width="3" height="16" fill="#2a2a2a"/><rect x="12" y="9" width="5" height="5" fill="#e0e0e0"/></svg>
<svg style="left:704px;top:701px" width="26" height="19" viewBox="0 0 26 19"><rect x="1" y="1" width="24" height="18" fill="#b8d8f0"/><circle cx="11" cy="13" r="9" fill="#f08020"/><path d="M8 8L16 13L8 18Z" fill="#fff"/></svg>
<svg style="left:762px;top:699px" width="28" height="21" viewBox="0 0 28 21"><rect x="0" y="0" width="28" height="21" rx="2" fill="#1a6a2a"/><path d="M3 1L14 18L25 1" fill="#f4f4f4"/><text x="10" y="14" font-size="11" font-weight="bold" font-family="Liberation Sans" fill="#1a6a2a">µ</text></svg>
<svg style="left:822px;top:699px" width="31" height="21" viewBox="0 0 31 21"><rect x="0" y="0" width="31" height="21" fill="#e01020"/><path d="M15.5 3L10 20M15.5 3L21 20M12 14H19" stroke="#fff" stroke-width="2.4" fill="none"/><circle cx="15.5" cy="4" r="2" fill="#fff"/></svg>
<svg style="left:883px;top:700px" width="30" height="20" viewBox="0 0 30 20"><circle cx="15" cy="13" r="12" fill="#2a78c8"/><path d="M6 12H24V20H6Z" fill="#f4f4f4"/><path d="M6 12L15 17L24 12" stroke="#888" fill="none"/></svg>
<svg style="left:942px;top:701px" width="28" height="19" viewBox="0 0 28 19"><path d="M8 2L26 0L22 19H4Z" fill="#a8dcd0"/><path d="M4 19L8 2" stroke="#608880" stroke-width="2"/></svg>
<svg style="left:1002px;top:703px" width="29" height="20" viewBox="0 0 29 20"><rect x="0" y="0" width="29" height="20" fill="#2a4a8a" stroke="#111"/><rect x="2" y="2" width="25" height="16" fill="#3a68b0"/><circle cx="7" cy="10" r="2.2" fill="none" stroke="#e02020" stroke-width="1.5"/><text x="10.5" y="13.5" font-size="8" font-weight="bold" font-family="Liberation Sans" fill="#fff">REC</text></svg>
</body></html>
